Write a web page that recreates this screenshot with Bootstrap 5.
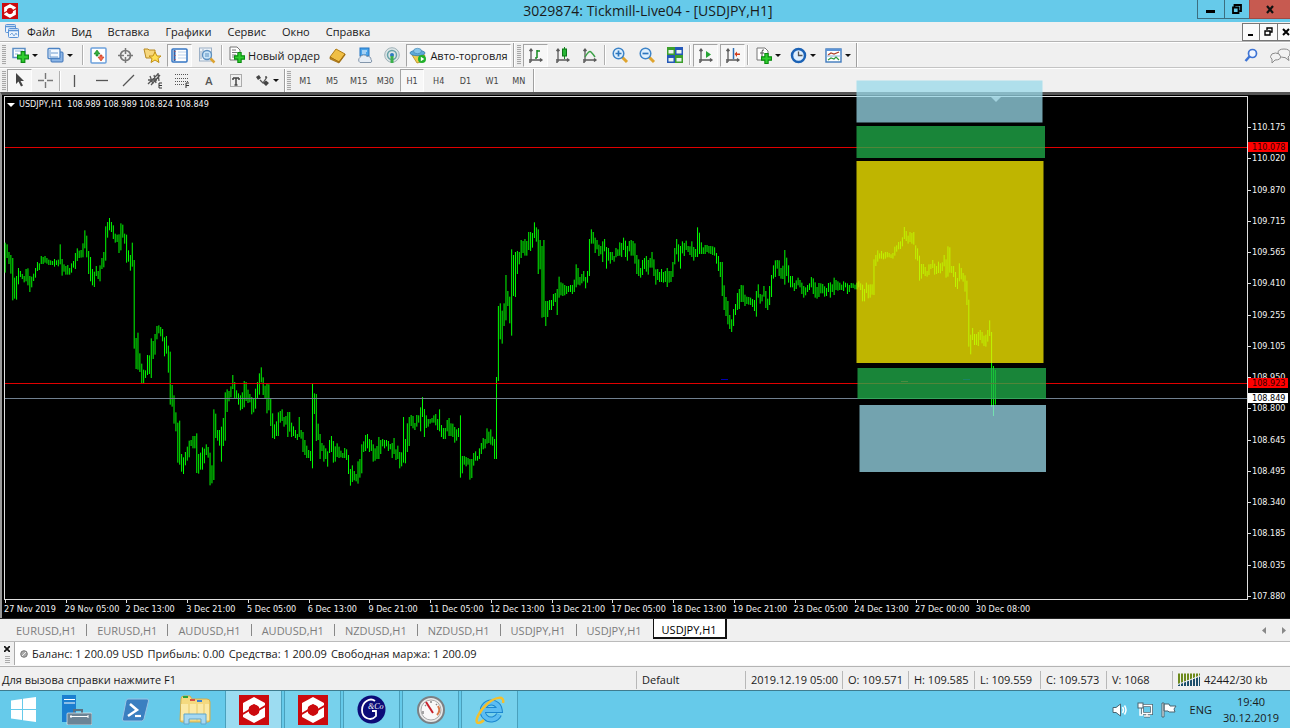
<!DOCTYPE html>
<html lang="ru">
<head>
<meta charset="utf-8">
<meta name="viewport" content="width=device-width, initial-scale=1">
<title>3029874: Tickmill-Live04 - [USDJPY,H1]</title>
<link href="https://cdn.jsdelivr.net/npm/bootstrap@5.3.0/dist/css/bootstrap.min.css" rel="stylesheet">
<style>
  body { font: 11px/15px "Open Sans", "Noto Sans", sans-serif; color: #1a1a1a; background: #f0f0f0; overflow: hidden; }
  button { font: inherit; color: inherit; background: none; border: 0; padding: 0; border-radius: 0; }
  svg { display: block; flex: none; }
  a { color: inherit; text-decoration: none; }

  .title-bar { height: 22px; background: #66caea; font-size: 14px; line-height: 22px; padding-left: 2px; }
  .title-bar .logo-mt { width: 16px; height: 16px; }
  .win-btn { height: 19px; border: 1px solid #3c6e80; border-top: 0; border-right: 0; display: flex; align-items: center; justify-content: center; }
  .win-min { width: 27px; } .win-max { width: 25px; } .win-close { width: 41px; background: #c75a50; border-color: #a04a44; }
  .menu-bar { height: 20px; border-bottom: 1px solid #b4b4b4; }
  .menu-bar nav { gap: 16px; padding-left: 7px; }
  .mdi-btn { width: 18px; height: 18px; background: #fafafa; border: 1px solid #777; border-left-width: 0; display: flex; align-items: center; justify-content: center; }
  .mdi-btn:first-child { border-left-width: 1px; }
  .mdi-btn:last-child { width: 12px; border-right: 0; justify-content: flex-end; }

  .tool-row { height: 26px; border-top: 1px solid #fff; border-bottom: 1px solid #c4c4c4; gap: 2px; padding-left: 2px; }
  .tool-row.last-row { height: 24px; border-bottom: 0; gap: 1px; }
  .grip { width: 4px; height: 20px; background: repeating-linear-gradient(#a8a8a8 0 1px, #ececec 1px 2px); }
  .rule-v { width: 2px; height: 20px; border-left: 1px solid #b0b0b0; border-right: 1px solid #fff; }
  .rule-end { width: 2px; height: 24px; border-left: 1px solid #a0a0a0; border-right: 1px solid #fff; }
  .tool { width: 25px; height: 23px; display: flex; align-items: center; justify-content: center; border: 1px solid transparent; }
  .tool.on { background: #f7f7f7; border-color: #a4a4a4 #fdfdfd #fdfdfd #a4a4a4; }
  .tool.wide { width: 98px; gap: 3px; }
  .tool.auto { width: 105px; gap: 3px; }
  .tool.drop { width: 33px; gap: 3px; }
  .tool.drop::after { content: ""; border: 3px solid transparent; border-top-color: #111; border-bottom: 0; }
  .set-draw { width: 187px; } .set-time { width: 240px; font: 9px/12px "DejaVu Sans Condensed", sans-serif; color: #444; }
  .set-draw .tool, .set-time .tool { flex: 1 1 0; margin: 0 1px; min-width: 0; }
  .letter { color: #555; font-weight: 600; }

  .chart-pane { background: #000; border-top: 3px solid #555; border-left: 2px solid #999; color: #f4f4f4; font: 9px/11px "DejaVu Sans Condensed", sans-serif; padding: 1px 0 0 2px; }
  .plot { border: 1px solid #e0e0e0; }
  .plot svg.bars { width: 100%; height: 100%; position: absolute; inset: 0; overflow: visible; }
  .caption { left: 2px; top: 2px; gap: 4px; }
  .caption::before { content: ""; margin-top: 4px; border: 4px solid transparent; border-top-color: #fff; border-bottom: 0; }
  .price-axis { width: 42px; padding: 26px 0 0 4px; }
  .price-axis span { position: relative; }
  .price-axis span::before { content: ""; position: absolute; left: -4px; top: 5px; width: 3px; height: 1px; background: #e0e0e0; }
  .tag { left: 0; width: 40px; padding-left: 4px; line-height: 10px; color: #300; background: #f00; transform: translateY(-50%); }
  .tag.now { color: #000; background: #fff; }
  .time-axis { width: 83%; height: 18px; }
  .time-axis span { flex: 1 1 0; min-width: 0; white-space: nowrap; padding-top: 4px; position: relative; }
  .time-axis span::before { content: ""; position: absolute; left: 1px; top: 0; width: 1px; height: 3px; background: #e0e0e0; }

  .chart-tabs { height: 23px; border-top: 1px solid #222; color: #7c7c7c; padding-left: 6px; }
  .chart-tabs a { display: flex; align-items: center; padding: 0 11px 0 10px; position: relative; }
  .chart-tabs a + a:not(.current)::before { content: ""; position: absolute; left: -1px; top: 5px; height: 12px; width: 1px; background: #888; }
  .chart-tabs .current { background: #fff; color: #000; border: solid #111; border-width: 0 2px 2px 1px; height: 20px; padding: 2px 8px 0; }
  .balance { height: 25px; border-top: 1px solid #bbb; border-bottom: 1px solid #f8f8f8; }
  .balance .well { background: #fff; border-left: 1px solid #aaa; gap: 4px; padding-left: 5px; }
  .status-bar { height: 24px; border-top: 1px solid #b4b4b4; padding: 2px 0 0 2px; }
  .status-bar > span { border-left: 1px solid #b8b8b8; padding-left: 5px; height: 18px; white-space: nowrap; display: flex; align-items: center; }
  .w-a { width: 109px; } .w-b { width: 97px; } .w-c { width: 66px; } .w-d { width: 118px; }

  .task-bar { height: 38px; background: #66caea; border-top: 1px solid #3e7b8e; gap: 2px; }
  .task { width: 57px; height: 37px; display: flex; align-items: center; justify-content: center; }
  .task.home { width: 46px; }
  .task.open { background: #77d1ec; border: 1px solid #4aa0bc; border-width: 0 1px; }
  .task.front { background: #9cdcf1; }
  .clock { width: 78px; text-align: center; line-height: 16px; }
</style>
</head>
<body class="d-flex flex-column min-vh-100">

<svg width="0" height="0" class="position-absolute" aria-hidden="true">
  <symbol id="logo" viewBox="0 0 30 30"><rect width="30" height="30" fill="#cc0a0e"/>
    <path fill="#fff" fill-rule="evenodd" d="M15 2 26 8V22L15 28 4 22V8zM15 9 10 12V18L15 21 20 18V12z"/>
    <path d="M17 16.500 28 10M13 13.500 2 20" stroke="#cc0a0e" stroke-width="2"/><circle cx="15" cy="15" r="5.500" fill="#cc0a0e"/></symbol>
  <symbol id="plus" viewBox="0 0 10 10"><path d="M3.500.5h3v3h3v3h-3v3h-3v-3h-3v-3h3z" fill="#2fce2f" stroke="#0a8a10"/></symbol>
  <symbol id="axes" viewBox="0 0 16 16"><path d="M3 2v13M1 13h13M1.500 4 3 2l1.500 2M12 11.500 14 13l-2 1.500M1 15h2" fill="none" stroke="#5a5a5a" stroke-width="1.300"/></symbol>
</svg>

<header class="title-bar d-flex position-relative">
  <div class="d-flex align-items-center"><svg class="logo-mt"><use href="#logo"/></svg></div>
  <div class="flex-grow-1 text-center pe-2 me-1">3029874: Tickmill-Live04 - [USDJPY,H1]</div>
  <div class="d-flex position-absolute end-0 top-0">
    <button class="win-btn win-min" aria-label="Свернуть"><svg width="10" height="10"><path d="M0 6h9v3H0z"/></svg></button>
    <button class="win-btn win-max" aria-label="Восстановить"><svg width="10" height="10"><path d="M2.500 2.500V1H9v6H7.500M1 3.500h5.500V9H1z" fill="none" stroke="#000" stroke-width="1.800"/></svg></button>
    <button class="win-btn win-close" aria-label="Закрыть"><svg width="9" height="9"><path d="M1 1l6 7M7 1 1 8" stroke="#111" stroke-width="2.200"/></svg></button>
  </div>
</header>

<div class="menu-bar d-flex align-items-center">
  <svg width="16" height="16" class="ms-1"><g fill="#eaf3fd" stroke="#5b93d6"><rect x="1.500" y=".5" width="10" height="8" rx="1"/><rect x="4.500" y="4.500" width="10" height="9" rx="1"/></g><path d="M2 2.500h9M5 6.500h9" stroke="#5b93d6" stroke-width="1.500"/><path d="M6 11l2-2 2 3 2-3 1 2" fill="none" stroke="#7aa8dd"/></svg>
  <nav class="d-flex flex-grow-1">
    <a href="#">Файл</a><a href="#">Вид</a><a href="#">Вставка</a><a href="#">Графики</a><a href="#">Сервис</a><a href="#">Окно</a><a href="#">Справка</a>
  </nav>
  <div class="d-flex">
    <button class="mdi-btn" aria-label="Свернуть окно"><svg width="8" height="8"><path d="M1 6h5v2H1z"/></svg></button>
    <button class="mdi-btn" aria-label="Восстановить окно"><svg width="9" height="9"><path d="M3 3V1h5v4H6M1 4h5v4H1z" fill="none" stroke="#000" stroke-width="1.400"/></svg></button>
    <button class="mdi-btn" aria-label="Закрыть окно"><svg width="8" height="8"><path d="M1 1l6 6M7 1 1 7" stroke="#000" stroke-width="2"/></svg></button>
  </div>
</div>

<div class="tool-row d-flex align-items-center">
  <i class="grip"></i>
  <button class="tool drop ms-n1" aria-label="Новый график"><svg width="17" height="17"><rect x="1" y="1.500" width="12" height="9" fill="#fff" stroke="#5d8ec4" stroke-width="1.500"/><path d="M3 4h8M3 7h3" stroke="#8fb3dc"/><use href="#plus" x="5" y="4" width="12" height="12"/></svg></button>
  <button class="tool drop me-1" aria-label="Профили"><svg width="17" height="17"><rect x="4" y="5" width="12" height="10" rx="1" fill="#8db6e6" stroke="#3c73b8"/><rect x="1" y="1.500" width="12" height="10" rx="1" fill="#f4f9ff" stroke="#4b82c3" stroke-width="1.300"/><path d="M3 3v7h8M4 6h7M13 13v-1" stroke="#6d9bd0" fill="none"/></svg></button>
  <i class="rule-v"></i>
  <button class="tool" aria-label="Обзор рынка"><svg width="17" height="17"><rect x="1" y="1" width="15" height="15" rx="1" fill="#fff" stroke="#6ba0dc" stroke-width="1.500"/><path d="M4 7l3-4 3 4H8v2H6V7z" fill="#35b040" stroke="#0c7c18" stroke-width=".6"/><path d="M8 10h2V8h2v2h2l-3 4z" fill="#f2694c" stroke="#c03010" stroke-width=".6"/></svg></button>
  <button class="tool" aria-label="Окно данных"><svg width="17" height="17"><circle cx="8.500" cy="8.500" r="5" fill="none" stroke="#777" stroke-width="1.700"/><path d="M8.500 1v6M8.500 10v6M1 8.500h6M10 8.500h6" stroke="#777" stroke-width="1.500"/></svg></button>
  <button class="tool" aria-label="Навигатор"><svg width="19" height="18"><path d="M1 3h4l1 1h6v8H3z" fill="#f6d77d" stroke="#b78a22"/><path d="M12 6l2 4h4l-3 2.500 1 4-4-2.500-4 2.500 1-4L6 10h4z" fill="#ffdf55" stroke="#c28f14"/></svg></button>
  <button class="tool on" aria-label="Терминал"><svg width="17" height="15"><rect x="1" y="1" width="15" height="13" rx="1" fill="#fff" stroke="#3575c4" stroke-width="1.500"/><path d="M3.500 2v11" stroke="#2a62ad" stroke-width="2"/><path d="M4 3v10" stroke="#d04040" stroke-dasharray="1 3"/><path d="M7 4h8M7 7h8M7 10h8" stroke="#bcd2ec"/></svg></button>
  <button class="tool" aria-label="Тестер стратегий"><svg width="18" height="17"><rect x="1.500" y="1" width="12" height="13" fill="#eef3f8" stroke="#9cb0c6"/><path d="M3 4v8M5 2v8" stroke="#9cb0c6"/><circle cx="9" cy="8" r="4.500" fill="#c9e4f8" stroke="#5b8fc0" stroke-width="1.300"/><path d="M8 6v4M10 6v4" stroke="#5b8fc0"/><path d="M12.500 11.500l4 4" stroke="#dca332" stroke-width="2.500"/></svg></button>
  <i class="rule-v"></i>
  <button class="tool wide"><svg width="17" height="18"><path d="M2 1h7l3 3v10H2z" fill="#fff" stroke="#777"/><path d="M4 4h4M4 6.500h5M4 9h4M4 11h3" stroke="#777"/><use href="#plus" x="6" y="6" width="11" height="11"/></svg><span class="text-nowrap">Новый ордер</span></button>
  <button class="tool" aria-label="Редактор"><svg width="17" height="17"><path d="M1 10 7 2l9 5-6 8z" fill="#f0bf45" stroke="#b07d16"/><path d="M1 10v2l9 4 6-8V7l-6 8z" fill="#c48a1c" stroke="#96660e" stroke-width=".7"/></svg></button>
  <button class="tool" aria-label="MQL5"><svg width="18" height="17"><rect x="4" y="1" width="9" height="8" fill="#49a3ea" stroke="#2275c2"/><path d="M6 4h5M6 6h4" stroke="#fff"/><path d="M4 15.500a3 3 0 010-5 4 4 0 017-1 3 3 0 014 3 2 2 0 010 3z" fill="#e6edf5" stroke="#8396ab"/></svg></button>
  <button class="tool" aria-label="Сигналы"><svg width="18" height="17"><circle cx="9" cy="8" r="7.300" fill="#dde5e6" stroke="#9fb2b8"/><circle cx="9" cy="8" r="4.500" fill="none" stroke="#68a3a8" stroke-width="1.500"/><circle cx="9" cy="8" r="2" fill="#2d7ac0"/><path d="M9 9v7" stroke="#3bb04a" stroke-width="3"/></svg></button>
  <button class="tool on auto"><svg width="18" height="17"><path d="M3 8h13l-4 7-4 1z" fill="#f0cb4f" stroke="#b28a1f" stroke-width=".8"/><ellipse cx="8.500" cy="6" rx="7.500" ry="2.700" fill="#5ea9d8" stroke="#3b7faf" stroke-width=".8"/><ellipse cx="8.500" cy="4" rx="4" ry="2.700" fill="#87c5ea" stroke="#3b7faf" stroke-width=".6"/><circle cx="13" cy="12" r="4" fill="#20b02a"/><path d="M11.800 9.800v4.500l3.500-2.200z" fill="#fff"/></svg><span class="text-nowrap">Авто-торговля</span></button>
  <i class="rule-end"></i><i class="grip ms-n1"></i>
  <button class="tool on" aria-label="Бары"><svg width="16" height="17"><use href="#axes" width="16" height="16"/><path d="M9 3v8M9 4h3M7 11h2" stroke="#168a20" stroke-width="1.500"/></svg></button>
  <button class="tool" aria-label="Свечи"><svg width="16" height="17"><use href="#axes" width="16" height="16"/><path d="M9.500 0v12" stroke="#168a20"/><rect x="7.500" y="2" width="4" height="7" fill="#27b535" stroke="#0d7517"/></svg></button>
  <button class="tool" aria-label="Линия"><svg width="16" height="17"><use href="#axes" width="16" height="16"/><path d="M3 10q4-7 6-5t4 5" fill="none" stroke="#3ba046" stroke-width="1.500"/></svg></button>
  <i class="rule-v"></i>
  <button class="tool" aria-label="Увеличить"><svg width="17" height="17"><path d="M10 10l5 5" stroke="#dfa42e" stroke-width="3"/><circle cx="6.500" cy="6.500" r="5.300" fill="#dff0fd" stroke="#3d84c8" stroke-width="1.500"/><path d="M3.500 6.500h6M6.500 3.500v6" stroke="#2d76bd" stroke-width="1.700"/></svg></button>
  <button class="tool" aria-label="Уменьшить"><svg width="17" height="17"><path d="M10 10l5 5" stroke="#dfa42e" stroke-width="3"/><circle cx="6.500" cy="6.500" r="5.300" fill="#dff0fd" stroke="#3d84c8" stroke-width="1.500"/><path d="M3.500 6.500h6" stroke="#2d76bd" stroke-width="1.700"/></svg></button>
  <button class="tool" aria-label="Окна плиткой"><svg width="16" height="16"><path d="M0 0h8v8H0zM8 8h8v8H8z" fill="#3b9f2c"/><path d="M8 0h8v8H8zM0 8h8v8H0z" fill="#2458b8"/><path d="M1.500 3h5v3.500h-5zM9.500 3h5v3.500h-5zM1.500 11h5v3.500h-5zM9.500 11h5v3.500h-5z" fill="#e9f3ee"/></svg></button>
  <i class="rule-v"></i>
  <button class="tool on" aria-label="Автопрокрутка"><svg width="16" height="17"><use href="#axes" width="16" height="16"/><path d="M8 4v7l5-3.500z" fill="#27a535"/></svg></button>
  <button class="tool on" aria-label="Сдвиг графика"><svg width="16" height="17"><use href="#axes" width="16" height="16"/><path d="M8.500 1v11" stroke="#2d6fb5" stroke-width="1.500"/><path d="M9.500 7 12 4.500v2h3v1.500h-3v2z" fill="#d23a18"/></svg></button>
  <i class="rule-v"></i>
  <button class="tool drop" aria-label="Индикаторы"><svg width="17" height="17"><path d="M2 1h8l3 3v9H2z" fill="#fff" stroke="#777"/><path d="M9 3q-2-1-2 2v6M5 6h4" fill="none" stroke="#555"/><use href="#plus" x="6" y="6" width="11" height="11"/></svg></button>
  <button class="tool drop" aria-label="Периоды"><svg width="17" height="17"><circle cx="8.500" cy="8.500" r="6.500" fill="#dff0ff" stroke="#1b62b5" stroke-width="2.500"/><path d="M8.500 4.500v4h4" fill="none" stroke="#555" stroke-width="1.300"/></svg></button>
  <button class="tool drop" aria-label="Шаблоны"><svg width="17" height="15"><rect x="1" y="1" width="15" height="13" fill="#fff" stroke="#3f79bd" stroke-width="1.400"/><path d="M1 2h15" stroke="#5b93d6" stroke-width="2"/><path d="M3 7l3-2 3 1 5-2" fill="none" stroke="#b04028" stroke-width="1.300"/><path d="M1 8h15" stroke="#8cb0d8"/><path d="M3 12l3-2 3 1 2-2 3 3" fill="none" stroke="#2f9a3c" stroke-width="1.200"/></svg></button>
  <i class="rule-end"></i>
  <div class="d-flex ms-auto align-items-center gap-2">
    <button aria-label="Поиск"><svg width="14" height="15"><circle cx="8.500" cy="5.500" r="4" fill="#f2f7ff" stroke="#3e74d4" stroke-width="1.700"/><path d="M5.500 8.500 1.500 13" stroke="#3e74d4" stroke-width="2.500"/></svg></button>
    <button class="ms-1" aria-label="Чат"><svg width="20" height="17"><path d="M15 10.500l4 3-1-3.500q2-1 2-4 0-4-6-4t-6 4 6 4.500z" fill="#f2f2f2" stroke="#8c8c8c"/><path d="M5 13l-3 3 0-4Q.5 11 .5 9.500 1 6 5.500 6t5 3.500-5.500 3.500z" fill="#f2f2f2" stroke="#8c8c8c"/></svg></button>
  </div>
</div>

<div class="tool-row last-row d-flex align-items-center">
  <i class="grip"></i>
  <button class="tool on" aria-label="Курсор"><svg width="12" height="15"><path d="M2 0v11l2.500-2.500L7 13.500 9 12.500 6.500 8H10z" fill="#444"/></svg></button>
  <button class="tool" aria-label="Перекрестие"><svg width="15" height="15"><path d="M7.500 0v6M7.500 9v6M0 7.500h6M9 7.500h6" stroke="#777" stroke-width="1.400"/></svg></button>
  <i class="rule-v"></i>
  <div class="set-draw d-flex">
    <button class="tool" aria-label="Вертикальная линия"><svg width="12" height="13"><path d="M5.500 1v12" stroke="#555" stroke-width="1.300"/></svg></button>
    <button class="tool" aria-label="Горизонтальная линия"><svg width="12" height="13"><path d="M0 6.500h12" stroke="#555" stroke-width="1.300"/></svg></button>
    <button class="tool" aria-label="Трендовая линия"><svg width="13" height="13"><path d="M1 12 12 1" stroke="#555" stroke-width="1.300"/></svg></button>
    <button class="tool" aria-label="Канал"><svg width="17" height="17"><path d="M1 12 11 2M4 13l9-10M1 8h9M3 4l3 8M7 3l2 8M11 1l1 8" stroke="#555" stroke-width="1.300"/><path d="M15 11h-3v5h3M12 13.500h3" fill="none" stroke="#333"/></svg></button>
    <button class="tool" aria-label="Фибоначчи"><svg width="16" height="17"><path d="M1 2.500h13M1 6.500h13M1 9.500h13M1 12.500h9" stroke="#555" stroke-dasharray="1 1"/><path d="M12 16v-5h3M12 13.500h3" fill="none" stroke="#333"/></svg></button>
    <button class="tool letter" aria-label="Текст">A</button>
    <button class="tool" aria-label="Метка"><svg width="14" height="15"><rect x="1.500" y="1.500" width="11" height="12" fill="none" stroke="#666" stroke-dasharray="1 1"/><path d="M4 5h6M7 5v7M5.500 12h3M4 5v2M10 5v2" stroke="#444" stroke-width="1.500"/></svg></button>
  </div>
  <button class="tool drop" aria-label="Стрелки"><svg width="15" height="13"><path d="M1 3l3-2 2 3-3 2zM8 9l3-2.500L14 9l-3 3z" fill="#444"/><path d="M5 6l3 3 4-6M10 3h2" fill="none" stroke="#555" stroke-width="1.300"/></svg></button>
  <i class="rule-end ms-n1"></i><i class="grip"></i>
  <div class="set-time d-flex ms-n1">
    <button class="tool">M1</button><button class="tool">M5</button><button class="tool">M15</button><button class="tool">M30</button><button class="tool on">H1</button><button class="tool">H4</button><button class="tool">D1</button><button class="tool">W1</button><button class="tool">MN</button>
  </div>
  <i class="rule-end ms-n1"></i>
</div>

<main class="chart-pane flex-grow-1 d-flex position-relative">
  <div class="flex-grow-1 d-flex flex-column">
    <div class="plot flex-grow-1 position-relative">
      <div class="caption d-flex position-absolute"><span>USDJPY,H1&nbsp; 108.989 108.989 108.824 108.849</span></div>
      <svg class="bars" viewBox="0 0 1242 502" preserveAspectRatio="none" role="img" aria-label="График USDJPY,H1">
        <path id="series" stroke="#00ff00" fill="none"/>
        <rect y="50" width="1242" height="1" fill="#e00000"/>
        <rect y="286" width="1242" height="1" fill="#e00000"/>
        <rect y="301" width="1242" height="1" fill="#708090"/>
        <rect x="716" y="282" width="7" height="1" fill="#0000b0"/>
        <rect x="958" y="282" width="7" height="1" fill="#0000b0"/>
        <rect x="896" y="284" width="7" height="1" fill="#c02020"/>
        <path d="M986 0h10l-5 5z" fill="#bbb"/>
        <g fill-opacity=".75">
          <rect x="851.500" y="-16.500" width="186" height="42" fill="#99d9ea"/>
          <rect x="851.500" y="29" width="188.500" height="32" fill="#22b14c"/>
          <rect x="851.500" y="64" width="187" height="202" fill="#fff200"/>
          <rect x="852.500" y="271" width="188.500" height="31" fill="#22b14c"/>
          <rect x="854.500" y="308" width="186.500" height="67" fill="#99d9ea"/>
        </g>
      </svg>
    </div>
    <div class="time-axis d-flex" id="times"></div>
  </div>
  <div class="position-relative d-flex">
    <div class="price-axis d-flex flex-column justify-content-between mb-3" id="prices"></div>
    <div class="tag position-absolute" style="top:9.7%">110.078</div>
    <div class="tag position-absolute" style="top:54.9%">108.923</div>
    <div class="tag now position-absolute" style="top:57.9%">108.849</div>
  </div>
</main>

<nav class="chart-tabs d-flex">
  <a href="#">EURUSD,H1</a><a href="#">EURUSD,H1</a><a href="#">AUDUSD,H1</a><a href="#">AUDUSD,H1</a><a href="#">NZDUSD,H1</a><a href="#">NZDUSD,H1</a><a href="#">USDJPY,H1</a><a href="#">USDJPY,H1</a><a href="#" class="current">USDJPY,H1</a>
  <div class="d-flex ms-auto align-items-center gap-3 pe-1">
    <svg width="4" height="7"><path d="M4 0v7L0 3.500z" fill="#888"/></svg><svg width="4" height="7"><path d="M0 0v7l4-3.500z" fill="#888"/></svg>
  </div>
</nav>

<section class="balance d-flex">
  <div class="d-flex flex-column align-items-center px-1 pt-1 gap-1"><button aria-label="Закрыть панель"><svg width="6" height="6"><path d="M0 0l6 6M6 0 0 6" stroke="#111" stroke-width="1.700"/></svg></button><svg width="5" height="8"><path d="M0 .5h5M0 2.500h5M0 4.500h5M0 6.500h5" stroke="#aaa"/></svg></div>
  <div class="well flex-grow-1 d-flex align-items-center"><svg width="8" height="8"><circle cx="4" cy="4" r="3.300" fill="#aaa" stroke="#777"/><path d="M2 6l4-4" stroke="#eee"/></svg><span>Баланс: 1 200.09 USD</span><span>Прибыль: 0.00</span><span>Средства: 1 200.09</span><span>Свободная маржа: 1 200.09</span></div>
</section>

<footer class="status-bar d-flex align-items-center">
  <div class="flex-grow-1">Для вызова справки нажмите F1</div>
  <span class="w-a">Default</span><span class="w-b">2019.12.19 05:00</span><span class="w-c">O: 109.571</span><span class="w-c">H: 109.585</span><span class="w-c">L: 109.559</span><span class="w-c">C: 109.573</span><span class="w-c">V: 1068</span>
  <span class="w-d"><svg width="22" height="13" class="me-1"><path d="M0 .5h22v2L0 11z" fill="#6d8a1c"/><path d="M0 13V11L22 3v10z" fill="#1d4f6c"/><path d="M2.500 0v13M5.500 0v13M8.500 0v13M11.500 0v13M14.500 0v13M17.500 0v13M20.500 0v13M0 11.500 22 3" stroke="#f0f0f0"/></svg>42442/30 kb</span>
</footer>

<div class="task-bar d-flex">
  <button class="task home" aria-label="Пуск"><svg width="25" height="25"><path d="M0 3.500 11 2v10H0zM12 1.800 25 0v12H12zM0 13h11v10L0 21.500zM12 13h13v12l-13-1.800z" fill="#fff"/></svg></button>
  <button class="task" aria-label="Диспетчер серверов"><svg width="30" height="30"><path d="M0 0h14v27H0z" fill="#1b7fd0"/><path d="M2 4.500h11M2 8h11" stroke="#fff"/><path d="M12 18v-3h8v3" fill="none" stroke="#5a7182" stroke-width="2"/><rect x="5" y="18" width="25" height="12" rx="1" fill="#6b8496" stroke="#e4eef4" stroke-width=".7"/><path d="M8 21.500h18M9 20v3M26 20v3" stroke="#fff"/></svg></button>
  <button class="task" aria-label="PowerShell"><svg width="28" height="24"><path d="M6 1h19q2 0 1.500 2L22 21q-.5 2-2.500 2H2q-2 0-1.500-2L4 3q.5-2 2-2z" fill="#3a7fc0" stroke="#9ac4e4"/><path d="M8 6l7 6-9 6" fill="none" stroke="#fff" stroke-width="2.500"/><path d="M13 18h6" stroke="#fff" stroke-width="2.200"/></svg></button>
  <button class="task" aria-label="Проводник"><svg width="32" height="30"><path d="M2 4q0-3 3-3h6l2 3h15q3 0 3 3v18q0 2-2 2H3q-2 0-2-2z" fill="#f4d97f" stroke="#d3ad4a"/><path d="M4 2h5" stroke="#2ca33a" stroke-width="2"/><path d="M11 5h5" stroke="#d65045" stroke-width="2"/><path d="M18 6h5" stroke="#3a7fd0" stroke-width="2"/><path d="M2 9h28v16H2z" fill="#fbe9a6"/><path d="M10 9v17M18 9v17M25 9v17" stroke="#e7c766"/><path d="M5 29V19h22v10h-5v-5H10v5z" fill="#a5d8f2" stroke="#5fa5cb"/></svg></button>
  <button class="task open front" aria-label="Tickmill MT4"><svg width="30" height="30"><use href="#logo"/></svg></button>
  <button class="task open" aria-label="Tickmill MT4"><svg width="30" height="30"><use href="#logo"/></svg></button>
  <button class="task open" aria-label="G&amp;Co"><svg width="29" height="29"><circle cx="14.500" cy="14.500" r="14" fill="#0c0c78"/><path d="M18 6C13 2 5 7 5 15s9 12 14 6v-5h-4" fill="none" stroke="#fff" stroke-width="1.800"/><text x="11" y="14" font-family="Liberation Serif, serif" font-style="italic" font-size="8" fill="#fff">&amp;Co</text></svg></button>
  <button class="task open" aria-label="Монитор"><svg width="28" height="28"><circle cx="14" cy="14" r="13" fill="#e8e8e8" stroke="#7b8084" stroke-width="2"/><circle cx="14" cy="14" r="10" fill="#f8f8f8" stroke="#aaa"/><path d="M6 18v-3M8 9l1 1M14 5v2M20 8l-1 1" stroke="#888" stroke-width="1.500"/><path d="M21 10q3 5-1 9" fill="none" stroke="#d87a4a" stroke-width="2"/><path d="M9 6l7 11" stroke="#c8202a" stroke-width="2"/></svg></button>
  <button class="task open" aria-label="Internet Explorer"><svg width="30" height="29"><path d="M24 19.500a8.500 8.500 0 11.700-4.500H9" fill="none" stroke="#1a86cf" stroke-width="6"/><path d="M24 19.500a8.500 8.500 0 11.700-4.500H9" fill="none" stroke="#5cbdf2" stroke-width="4"/><path d="M28 8c2-8-8-6-16 1S-1 27 3 28c2 0 4-1 6-3" fill="none" stroke="#f4c02c" stroke-width="2.500"/></svg></button>
  <div class="d-flex ms-auto align-items-center">
    <svg width="17" height="16" class="me-1"><path d="M1 5.500h3L8.500 2v12L4 10.500H1z" fill="#fff" stroke="#4a6470"/><path d="M10.500 5q2 3 0 6M12.500 3.500q3 4.500 0 9" fill="none" stroke="#fff" stroke-width="1.500"/></svg>
    <svg width="16" height="16" class="ms-1"><path d="M5.500 3.500h9v8h-9zM7 14h6M10 11v3" fill="none" stroke="#4a6470" stroke-width="3"/><path d="M5.500 3.500h9v8h-9zM7 14h6M10 11v3M3 5v8h3" fill="none" stroke="#fff" stroke-width="1.400"/><rect x="1" y="1" width="5" height="5" fill="#fff" stroke="#4a6470"/></svg>
    <svg width="17" height="16" class="ms-2"><path d="M1 1h2v14H1zM3 2h5l1 2h6l-2 3 1 3H8L7 9H3z" fill="#fff" stroke="#4a6470"/></svg>
    <span class="ms-2 ps-1">ENG</span>
    <div class="clock"><div>19:40</div><div>30.12.2019</div></div>
  </div>
</div>

<script src="https://cdn.jsdelivr.net/npm/bootstrap@5.3.0/dist/js/bootstrap.bundle.min.js"></script>
<script>
  // High and low of every hourly bar, in thirds of a pixel below the chart's reference level.
  const hl = `128-218 133-174 156-192 165-221 174-301 233-296 228-299 204-253 213-231 222-237 228-247 207-244 205-256 228-276 230-262 221-243 204-233 186-213 190-210 168-192
171-192 168-188 174-191 179-195 181-195 183-195 177-200 181-195 179-199 133-193 177-227 193-215 198-224 195-224 204-224 190-218 183-203 159-207 145-183 152-174
150-173 130-172 91-145 107-172 153-222 171-244 207-256 215-261 198-228 213-237 196-244 174-207 156-202 79-182 66-113 54-91 66-96 76-117 101-128 104-126
103-159 70-151 74-113 101-131 104-188 151-185 165-212 128-200 180-446 414-507 398-509 460-516 491-550 509-550 511-534 465-525 466-522 415-534 423-477 402-464
378-418 376-400 381-409 387-424 412-469 408-461 437-518 455-614 555-620 586-671 637-694 668-788 662-794 762-815 772-822 756-796 740-782 722-772 720-738 708-745
708-745 700-819 762-821 758-809 742-809 746-790 733-765 741-773 758-856 796-850 628-840 641-714 690-722 690-737 680-785 654-738 577-722 568-636 573-604 559-592
525-567 546-597 571-597 580-614 586-631 577-627 543-622 546-603 569-609 582-607 591-643 595-637 566-626 546-597 520-584 502-547 532-585 557-597 550-640 553-631
595-678 640-714 673-717 664-708 637-708 633-668 628-663 651-680 648-674 636-711 636-695 668-711 679-708 690-714 702-720 651-711 690-716 696-756 720-765 737-774
750-774 753-783 550-805 580-642 582-723 671-720 702-777 729-753 736-785 745-777 754-800 720-759 708-756 723-788 739-785 730-771 740-774 752-772 759-774 744-774
748-780 765-822 807-857 796-846 813-841 822-844 784-851 777-833 733-820 724-756 705-753 702-745 717-756 720-753 733-785 745-782 738-777 711-777 720-762 717-739
720-745 720-739 723-753 732-748 729-774 714-762 748-780 737-777 756-805 757-799 651-788 717-790 670-756 651-738 645-678 648-685 669-690 645-680 646-668 622-694
591-651 627-711 646-684 657-680 657-671 654-668 646-668 642-676 657-690 628-694 675-711 684-717 684-717 660-694 654-708 670-708 671-711 681-728 688-722 684-711
646-833 768-820 768-794 771-799 774-794 777-839 777-834 759-797 754-782 768-782 745-777 729-762 714-748 717-745 685-731 695-729 688-734 710-737 717-777 531-777
318-543 310-418 332-431 310-378 225-361 273-318 290-370 148-407 165-288 156-291 153-222 156-193 120-174 123-159 117-167 123-167 96-150 96-153 99-143 67-114
82-125 88-222 120-208 138-353 120-351 303-378 303-351 300-330 300-330 282-318 279-306 267-345 230-293 247-286 250-288 255-286 258-282 258-276 255-276 255-282
239-276 193-262 204-254 231-256 222-250 213-244 231-265 213-248 117-228 88-131 96-131 113-159 120-148 134-168 138-163 124-186 117-154 141-206 144-182 156-191
156-180 168-185 144-172 148-168 127-167 129-171 113-150 122-171 138-182 123-154 120-167 123-167 130-191 165-222 178-228 204-233 180-225 174-207 168-215 180-224
174-203 156-203 178-228 208-254 207-240 216-246 207-246 216-248 213-246 204-261 213-248 213-246 186-231 144-193 117-163 133-185 138-206 124-160 129-168 122-150
138-156 139-165 124-171 141-182 147-171 82-171 98-162 127-162 142-162 135-162 135-156 138-160 138-162 139-165 142-167 159-191 168-213 186-231 186-288 256-330
291-348 303-373 345-387 358-396 327-378 312-345 279-330 267-327 255-306 256-306 284-318 290-312 291-314 293-315 297-321 300-333 273-350 253-293 282-311 284-304
258-290 273-324 296-330 258-315 225-291 196-236 181-231 180-206 181-228 204-236 197-237 150-254 173-228 196-248 228-262 228-262 249-273 241-267 233-256 240-262
248-282 258-293 262-286 255-276 250-270 231-262 235-282 247-293 261-296 249-291 250-280 252-280 259-290 264-288 249-276 247-293 253-276 233-285 240-270 244-272
248-270 254-270 244-273 248-262 250-282 255-276 249-264 250-264 254-268 248-268 244-262 250-270 254-304 267-304 248-279 254-295 253-293 253-284 178-285 165-198
151-185 160-176 153-176 160-178 156-176 156-172 159-172 163-174 159-176 140-167 136-155 126-148 124-147 112-139 81-117 93-123 107-131 96-126 99-131 96-134
136-178 145-182 167-242 192-236 192-222 201-228 213-230 193-225 192-207 180-204 191-224 198-222 185-219 190-220 187-213 165-199 178-233 139-230 142-218 198-219
198-231 216-261 234-267 190-244 204-238 219-245 226-275 242-315 299-440 404-463 384-420 402-435 402-435 396-438 390-420 396-430 407-438 404-440 390-425 361-408
396-620 498-648 510-614`.split(/\s+/);
  const pitch = 60.7 / 32;
  document.getElementById('series').setAttribute('d', hl.map((bar, i) => {
    const [top, bottom] = bar.split('-').map(v => (+v / 3 + 103).toFixed(2));
    return `M${(i * pitch + 0.2).toFixed(2)} ${top}V${bottom}`;
  }).join(''));

  const fill = (id, list) => { document.getElementById(id).innerHTML = list.map(t => `<span>${t}</span>`).join(''); };
  fill('times', ['27 Nov 2019', '29 Nov 05:00', '2 Dec 13:00', '3 Dec 21:00', '5 Dec 05:00', '6 Dec 13:00', '9 Dec 21:00', '11 Dec 05:00', '12 Dec 13:00', '13 Dec 21:00', '17 Dec 05:00', '18 Dec 13:00', '19 Dec 21:00', '23 Dec 05:00', '24 Dec 13:00', '27 Dec 00:00', '30 Dec 08:00']);
  fill('prices', ['110.175', '110.020', '109.870', '109.715', '109.565', '109.410', '109.255', '109.105', '108.950', '108.800', '108.645', '108.495', '108.340', '108.185', '108.035', '107.880']);
</script>
</body>
</html>
